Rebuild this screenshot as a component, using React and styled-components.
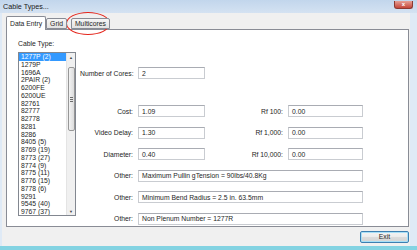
import React from 'react';
import styled, { createGlobalStyle } from 'styled-components';

const Global = createGlobalStyle`
    body {
        margin: 0;
        font-family: "Liberation Sans", Arial, sans-serif;
        font-size: 6.8px;
        color: #1e1e1e;
    }
`;

//styles
const Window = styled.div`
    position: relative;
    width: 417px;
    height: 250px;
    display: flex;
    flex-direction: column;
    background: #dfeaf6;
    overflow: hidden;
`;
const TitleBar = styled.div`
    height: 13px;
    display: flex;
    align-items: center;
    justify-content: space-between;
    padding-left: 3px;
    background: linear-gradient(180deg, #c2d6ec 0%, #d4e2f2 100%);
`;
const Title = styled.span`
    font-size: 7.2px;
    color: #1a1a1a;
`;
const Close = styled.span`
    width: 17px;
    height: 7px;
    margin: -4px 4px 0 0;
    border: 1px solid #8b3a32;
    border-top: none;
    border-radius: 0 0 3px 3px;
    background: linear-gradient(180deg, #e6a095 0%, #c4463a 100%);
    color: #fff;
    font-size: 6px;
    line-height: 7px;
    text-align: center;
    font-weight: bold;
`;
const Body = styled.div`
    flex: 1;
    display: flex;
    flex-direction: column;
    margin: 0 7px 0 2px;
    padding: 3px 1px 0 4px;
    background: #f0f0f0;
`;
const BottomEdge = styled.div`
    height: 4px;
    background: #83d3e2;
`;
const TabStrip = styled.div`
    height: 13px;
    display: flex;
    align-items: flex-end;
`;
const Tab = styled.div`
    position: relative;
    height: ${p => (p.$active ? '13px' : '9px')};
    margin-bottom: ${p => (p.$active ? '-1px' : '0')};
    margin-left: ${p => p.$gap || 0}px;
    padding: 0 3px;
    display: flex;
    align-items: center;
    border: 1px solid #898c95;
    border-bottom: ${p => (p.$active ? 'none' : '1px solid #898c95')};
    border-radius: 2px 2px 0 0;
    background: ${p => (p.$active ? '#fff' : 'linear-gradient(180deg, #f6f6f6 0%, #e2e2e2 100%)')};
    z-index: ${p => (p.$active ? 2 : 1)};
    font-size: 6.8px;
`;
const Panel = styled.div`
    height: 198px;
    box-sizing: border-box;
    display: flex;
    gap: 4px;
    padding: 10px 0 0 11px;
    border: 1px solid #898c95;
    background: #fff;
`;
const ListColumn = styled.div`
    display: flex;
    flex-direction: column;
    gap: 4px;
`;
const Caption = styled.div`
    line-height: 8px;
`;
const ListBox = styled.div`
    width: 58px;
    height: 164px;
    box-sizing: border-box;
    display: flex;
    border: 1px solid #828790;
`;
const Items = styled.ul`
    flex: 1;
    margin: 0;
    padding: 0;
    list-style: none;
    overflow: hidden;
`;
const Item = styled.li`
    height: 7.75px;
    line-height: 7.75px;
    padding-left: 2px;
    white-space: nowrap;
    background: ${p => (p.$selected ? '#3399ff' : 'transparent')};
    color: ${p => (p.$selected ? '#fff' : '#1e1e1e')};
`;
const ScrollBar = styled.div`
    width: 8px;
    display: flex;
    flex-direction: column;
    background: #f0f0f0;
    border-left: 1px solid #e4e4e4;
`;
const Arrow = styled.div`
    height: 8px;
    display: flex;
    align-items: center;
    justify-content: center;
    font-size: 4px;
    color: #444;
`;
const Track = styled.div`
    flex: 1;
    display: flex;
    flex-direction: column;
    padding-top: ${p => p.$top}px;
`;
const Thumb = styled.div`
    height: ${p => p.$size}px;
    margin: 0 0.5px;
    display: flex;
    flex-direction: column;
    align-items: center;
    justify-content: center;
    gap: 1px;
    border: 1px solid #979797;
    border-radius: 2px;
    background: linear-gradient(90deg, #f3f3f3 0%, #dcdcdc 100%);
`;
const Grip = styled.span`
    width: 3px;
    height: 1px;
    background: #6b6b6b;
`;
const Form = styled.div`
    display: flex;
    flex-direction: column;
    padding-top: 27px;
`;
const Grid = styled.div`
    display: grid;
    grid-template-columns: 53px 67px 73px 75px;
    grid-auto-rows: 12px;
    column-gap: 5px;
    row-gap: 9.5px;
    align-items: center;
    margin-top: ${p => p.$top || 0}px;
`;
const Label = styled.label`
    text-align: right;
    white-space: nowrap;
`;
const Field = styled.div`
    grid-column: ${p => (p.$wide ? '2 / 5' : 'auto')};
    height: 12px;
    box-sizing: border-box;
    padding-left: 3px;
    display: flex;
    align-items: center;
    border: 1px solid #c9ccd1;
    border-top-color: #a9acb3;
    background: #fff;
    white-space: nowrap;
    overflow: hidden;
`;
const Footer = styled.div`
    flex: 1;
    display: flex;
    justify-content: flex-end;
    align-items: center;
`;
const Button = styled.button`
    width: 49px;
    height: 12px;
    padding: 0;
    margin-top: 0;
    font-family: inherit;
    font-size: 6.8px;
    color: #1e1e1e;
    border: 1px solid #3c7fb1;
    border-radius: 2px;
    background: linear-gradient(180deg, #f4f4f4 0%, #ebebeb 50%, #dcdcdc 51%, #d4d4d4 100%);
    box-shadow: inset 0 0 0 1px #a8dff6;
`;
const Mark = styled.div`
    position: absolute;
    left: 66px;
    top: 12px;
    width: 44px;
    height: 23px;
    box-sizing: border-box;
    border: 1.5px solid #e4261c;
    border-radius: 50%;
`;

const cables = [
    '1277P (2)', '1279P', '1696A', '2PAIR (2)', '6200FE', '6200UE', '82761',
    '82777', '82778', '8281', '8286', '8405 (5)', '8769 (19)', '8773 (27)',
    '8774 (9)', '8775 (11)', '8776 (15)', '8778 (6)', '9291', '9545 (40)', '9767 (37)',
];

const rows = [
    ['Cost:', '1.09', 'Rf 100:', '0.00'],
    ['Video Delay:', '1.30', 'Rf 1,000:', '0.00'],
    ['Diameter:', '0.40', 'Rf 10,000:', '0.00'],
];

const others = [
    'Maximum Pullin gTension = 90lbs/40.8Kg',
    'Minimum Bend Radius = 2.5 in. 63.5mm',
    'Non Plenum Number = 1277R',
];

const App = () => {
    return (
        <Window>
            <Global />
            <TitleBar>
                <Title>Cable Types...</Title>
                <Close>x</Close>
            </TitleBar>
            <Body>
                <TabStrip>
                    <Tab $active>Data Entry</Tab>
                    <Tab>Grid</Tab>
                    <Tab $gap={4}>Multicores</Tab>
                </TabStrip>
                <Panel>
                    <ListColumn>
                        <Caption>Cable Type:</Caption>
                        <ListBox>
                            <Items>
                                {cables.map((c, i) => (
                                    <Item key={c} $selected={i === 0}>{c}</Item>
                                ))}
                            </Items>
                            <ScrollBar>
                                <Arrow>▲</Arrow>
                                <Track $top={6}>
                                    <Thumb $size={62}>
                                        <Grip /><Grip /><Grip />
                                    </Thumb>
                                </Track>
                                <Arrow>▼</Arrow>
                            </ScrollBar>
                        </ListBox>
                    </ListColumn>
                    <Form>
                        <Grid>
                            <Label>Number of Cores:</Label>
                            <Field>2</Field>
                        </Grid>
                        <Grid $top={26}>
                            {rows.map(r => (
                                <React.Fragment key={r[0]}>
                                    <Label>{r[0]}</Label>
                                    <Field>{r[1]}</Field>
                                    <Label>{r[2]}</Label>
                                    <Field>{r[3]}</Field>
                                </React.Fragment>
                            ))}
                            {others.map(o => (
                                <React.Fragment key={o}>
                                    <Label>Other:</Label>
                                    <Field $wide>{o}</Field>
                                </React.Fragment>
                            ))}
                        </Grid>
                    </Form>
                </Panel>
                <Footer>
                    <Button>Exit</Button>
                </Footer>
            </Body>
            <BottomEdge />
            <Mark />
        </Window>
    );
};

export default App;
